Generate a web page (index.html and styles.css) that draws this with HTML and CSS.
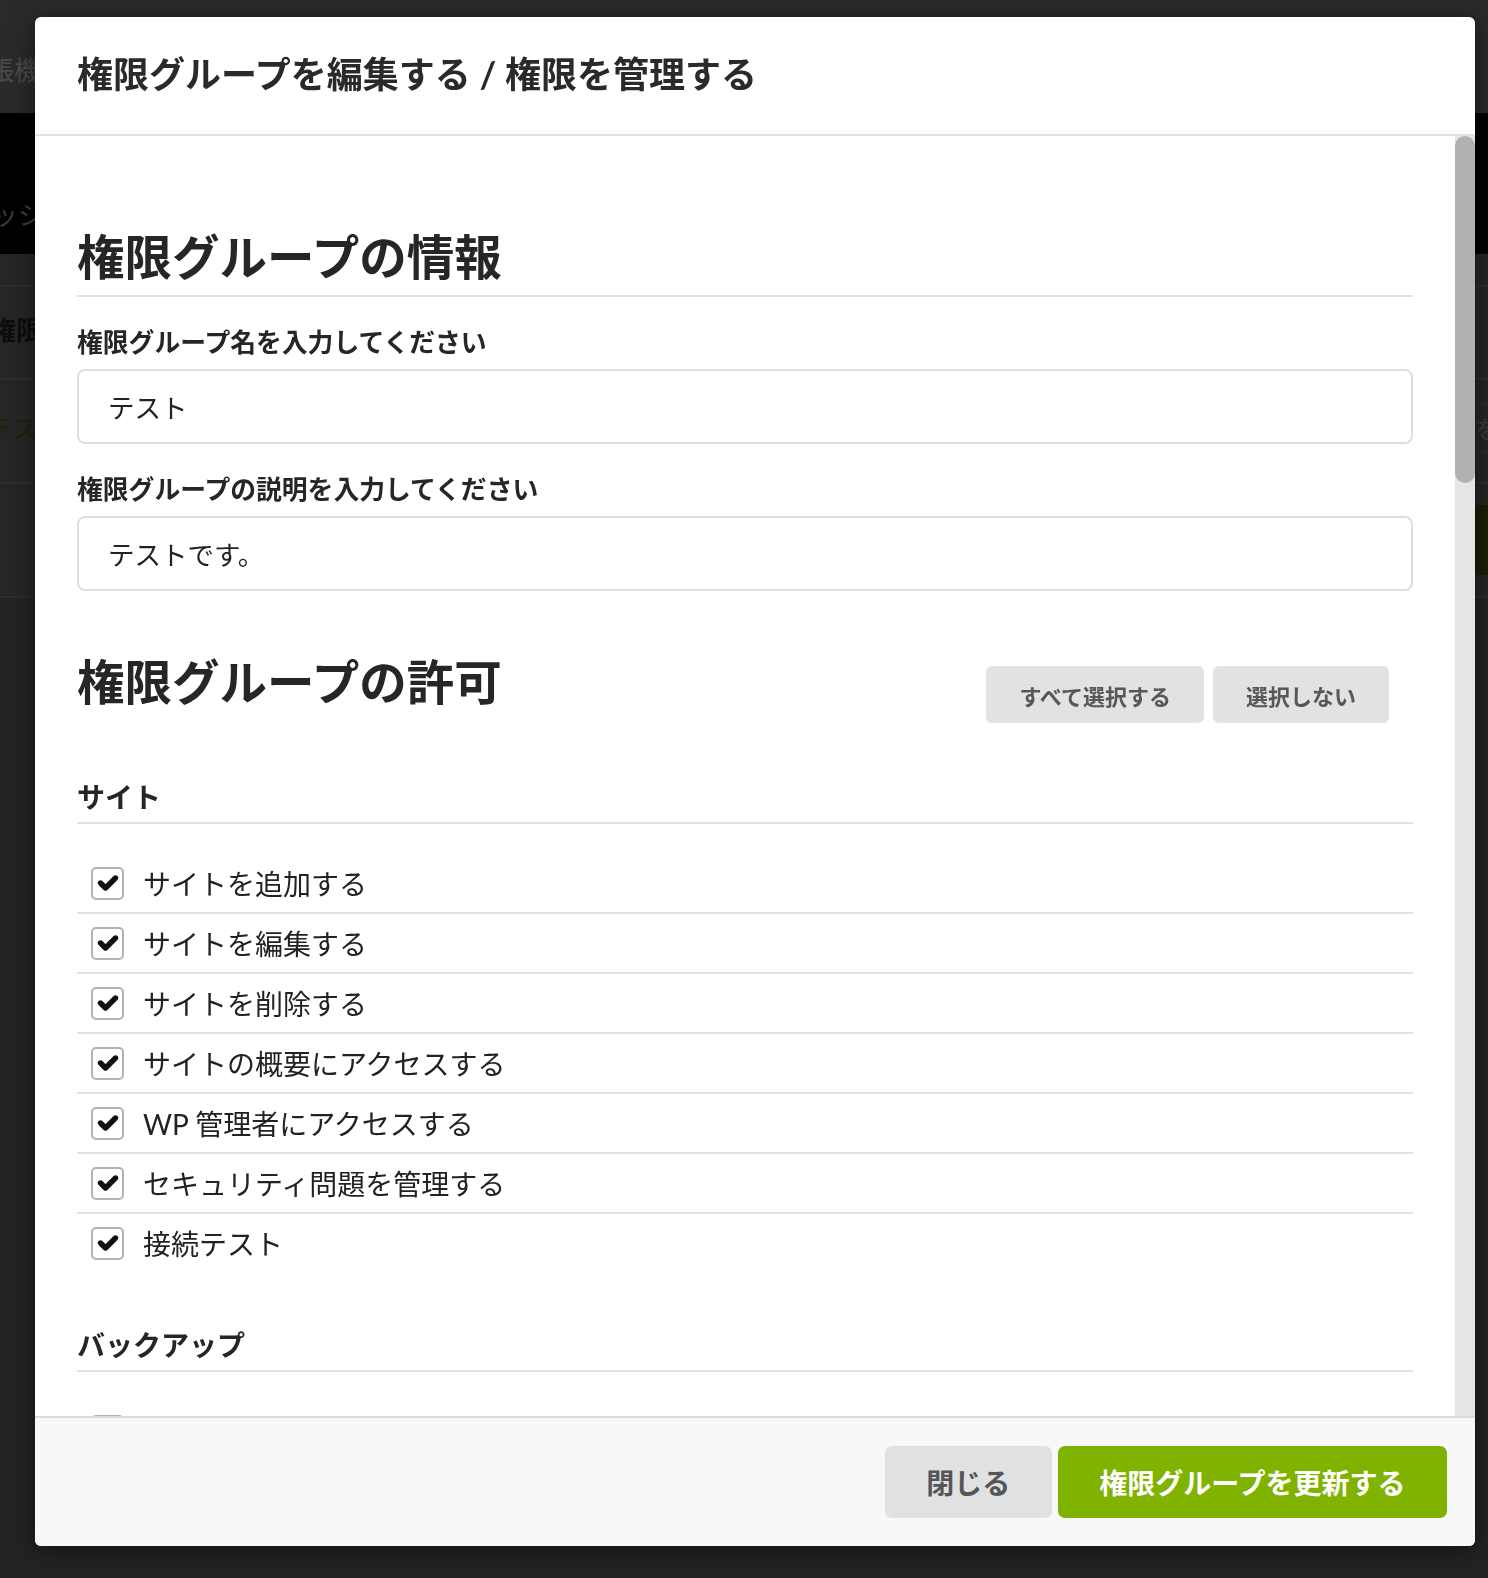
FILE: index.html
```html
<!DOCTYPE html>
<html lang="ja">
<head>
<meta charset="utf-8">
<title>権限グループを編集する / 権限を管理する</title>
<link rel="stylesheet" href="styles.css">
</head>
<body>
<div class="page">
  <div class="bg-top"><span class="bg-text">帳機</span></div>
  <div class="bg-black"><span class="bg-text dim">ッシ</span></div>
  <div class="bg-gap"></div>
  <div class="bg-row r1"><span class="bg-text strong">権限</span></div>
  <div class="bg-row r2"><span class="bg-text olive">テス</span><span class="bg-right">を</span></div>
  <div class="bg-row r3"><span class="bg-btn"></span></div>
</div>

<div class="modal">
  <div class="modal-header">
    <h1 class="modal-title">権限グループを編集する / 権限を管理する</h1>
  </div>
  <div class="modal-main">
    <div class="modal-body">
      <section class="info">
        <h2 class="section-title underline">権限グループの情報</h2>
        <label class="field-label">権限グループ名を入力してください</label>
        <input class="field-input" type="text" value="テスト">
        <label class="field-label">権限グループの説明を入力してください</label>
        <input class="field-input" type="text" value="テストです。">
      </section>

      <section class="perms">
        <div class="perms-head">
          <h2 class="section-title">権限グループの許可</h2>
          <div class="head-actions">
            <button class="btn-light">すべて選択する</button>
            <button class="btn-light">選択しない</button>
          </div>
        </div>

        <div class="group first">
          <h3 class="group-title">サイト</h3>
          <ul class="perm-list">
            <li><span class="cb"><svg viewBox="0 0 24 20" width="24" height="20"><polyline points="4.5,10 9.5,15 19.5,5"/></svg></span><span class="perm-text">サイトを追加する</span></li>
            <li><span class="cb"><svg viewBox="0 0 24 20" width="24" height="20"><polyline points="4.5,10 9.5,15 19.5,5"/></svg></span><span class="perm-text">サイトを編集する</span></li>
            <li><span class="cb"><svg viewBox="0 0 24 20" width="24" height="20"><polyline points="4.5,10 9.5,15 19.5,5"/></svg></span><span class="perm-text">サイトを削除する</span></li>
            <li><span class="cb"><svg viewBox="0 0 24 20" width="24" height="20"><polyline points="4.5,10 9.5,15 19.5,5"/></svg></span><span class="perm-text">サイトの概要にアクセスする</span></li>
            <li><span class="cb"><svg viewBox="0 0 24 20" width="24" height="20"><polyline points="4.5,10 9.5,15 19.5,5"/></svg></span><span class="perm-text">WP 管理者にアクセスする</span></li>
            <li><span class="cb"><svg viewBox="0 0 24 20" width="24" height="20"><polyline points="4.5,10 9.5,15 19.5,5"/></svg></span><span class="perm-text">セキュリティ問題を管理する</span></li>
            <li><span class="cb"><svg viewBox="0 0 24 20" width="24" height="20"><polyline points="4.5,10 9.5,15 19.5,5"/></svg></span><span class="perm-text">接続テスト</span></li>
          </ul>
        </div>

        <div class="group">
          <h3 class="group-title">バックアップ</h3>
          <ul class="perm-list">
            <li><span class="cb"></span><span class="perm-text">バックアップを作成する</span></li>
          </ul>
        </div>
      </section>
    </div>
    <div class="scrollbar"><div class="scrollbar-thumb"></div></div>
  </div>
  <div class="modal-footer">
    <button class="btn btn-close">閉じる</button>
    <button class="btn btn-primary">権限グループを更新する</button>
  </div>
</div>
</body>
</html>
```

FILE: styles.css
```css
* { box-sizing: border-box; }
html, body { margin: 0; padding: 0; }
body {
  width: 1488px;
  height: 1578px;
  overflow: hidden;
  background: #232323;
  font-family: Lato, "Noto Sans CJK JP", sans-serif;
  color: #222;
}

/* background page (under the dimmed overlay) */
.page { display: flex; flex-direction: column; }
.bg-top { height: 113px; background: #2a2a2a; display: flex; align-items: flex-end; padding-bottom: 26px; }
.bg-text { font-size: 26px; color: #4a4a4a; margin-left: -12px; white-space: nowrap; }
.bg-text.dim { color: #3a3a3a; margin-left: -8px; }
.bg-text.strong { color: #0d0d0d; font-weight: 700; margin-left: -10px; }
.bg-text.olive { color: #1d2208; margin-left: -14px; }
.bg-black { height: 141px; background: #000; display: flex; align-items: flex-end; padding-bottom: 22px; }
.bg-gap { height: 31px; background: #262626; }
.bg-row { background: #262626; border-top: 2px solid #2e2e2e; display: flex; align-items: center; justify-content: space-between; }
.r1 { height: 93px; padding-bottom: 8px; }
.r2 { height: 104px; padding-bottom: 8px; }
.r3 { height: 116px; border-bottom: 2px solid #2e2e2e; align-items: flex-start; justify-content: flex-end; }
.bg-right { font-size: 24px; color: #3a3a3a; padding: 6px 0; border-top: 1px solid #303030; border-bottom: 1px solid #303030; width: 13px; overflow: hidden; }
.bg-btn { display: block; width: 13px; height: 70px; margin-top: 21px; background: #1b1f06; }

/* modal */
.modal {
  position: fixed;
  left: 35px;
  top: 17px;
  width: 1440px;
  height: 1529px;
  background: #fff;
  border-radius: 6px;
  box-shadow: 0 4px 24px rgba(0, 0, 0, 0.5);
  display: flex;
  flex-direction: column;
  overflow: hidden;
}
.modal-header {
  flex: none;
  height: 119px;
  padding: 0 42px 2px;
  display: flex;
  align-items: center;
  border-bottom: 2px solid #e3e3e3;
}
.modal-title {
  margin: 0;
  font-size: 36px;
  line-height: 1.2;
  font-weight: 700;
  color: #2a2a2a;
}

.modal-main {
  flex: 1;
  min-height: 0;
  display: flex;
}
.modal-body {
  flex: 1;
  min-width: 0;
  overflow: hidden;
  padding: 0 42px;
}
.scrollbar {
  flex: none;
  width: 20px;
  background: #e5e5e5;
}
.scrollbar-thumb {
  height: 347px;
  background: #b1b1b1;
  border-radius: 10px;
}

.info { padding-top: 88px; display: flex; flex-direction: column; }
.section-title {
  margin: 0;
  font-size: 47.5px;
  line-height: 60px;
  font-weight: 700;
  color: #262626;
}
.section-title.underline { padding-top: 3px; padding-bottom: 8px; border-bottom: 2px solid #e2e2e2; }
.field-label {
  display: block;
  margin-top: 27px;
  font-size: 25.8px;
  line-height: 36px;
  font-weight: 700;
  color: #262626;
}
.field-input {
  display: block;
  width: 100%;
  height: 75px;
  margin-top: 9px;
  padding: 0 29px;
  border: 2px solid #dedede;
  border-radius: 8px;
  font-family: Lato, "Noto Sans CJK JP", sans-serif;
  font-size: 26.5px;
  color: #222;
  background: #fff;
}

.perms-head {
  margin-top: 57px;
  display: flex;
  justify-content: space-between;
  align-items: flex-start;
  padding-right: 24px;
}
.perms-head .section-title { padding-top: 4px; }
.head-actions { display: flex; gap: 9px; margin-top: 18px; }
.btn-light {
  height: 57px;
  padding: 0 33px;
  border: none;
  border-radius: 6px;
  background: #e1e2e4;
  color: #575757;
  font-family: Lato, "Noto Sans CJK JP", sans-serif;
  font-size: 22px;
  font-weight: 700;
}

.group { margin-top: 51px; }
.group.first { margin-top: 52px; }
.group-title {
  margin: 0;
  font-size: 28px;
  line-height: 40px;
  font-weight: 700;
  color: #262626;
  padding-top: 2px;
  padding-bottom: 5px;
  border-bottom: 2px solid #e2e2e2;
}
.perm-list { list-style: none; margin: 30px 0 0; padding: 0; }
.perm-list li {
  height: 58px;
  box-sizing: content-box;
  display: flex;
  align-items: center;
}
.perm-list li + li { border-top: 2px solid #e2e2e2; }
.cb {
  flex: none;
  width: 33px;
  height: 33px;
  margin-left: 14px;
  border: 2px solid #b3b3b3;
  border-radius: 5px;
  display: flex;
  align-items: center;
  justify-content: center;
  background: #fff;
}
.cb svg { display: block; fill: none; stroke: #111; stroke-width: 5.4; stroke-linecap: round; stroke-linejoin: round; }
.perm-text {
  margin-left: 19px;
  font-size: 28px;
  color: #222;
  white-space: nowrap;
}

.modal-footer {
  flex: none;
  height: 130px;
  border-top: 2px solid #dcdcdc;
  background: #f7f8fa;
  display: flex;
  justify-content: flex-end;
  align-items: center;
  gap: 6px;
  padding: 0 28px;
}
.btn {
  height: 72px;
  padding: 0 41.5px;
  border: none;
  border-radius: 7px;
  font-family: Lato, "Noto Sans CJK JP", sans-serif;
  font-size: 28px;
  font-weight: 700;
}
.btn-close { background: #e0e1e3; color: #555; }
.btn-primary { background: #80b300; color: #fff; }
```
